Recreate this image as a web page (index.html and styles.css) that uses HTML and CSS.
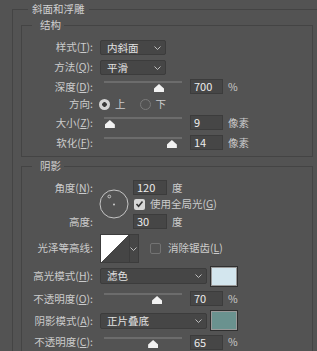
FILE: index.html
```html
<!DOCTYPE html>
<html lang="zh-CN">
<head>
  <meta charset="UTF-8" />
  <title>斜面和浮雕</title>
  <meta name="viewport" content="width=device-width, initial-scale=1.0" />
  <link rel="stylesheet" href="styles.css">
</head>
<body>
  <fieldset class="group outer">
    <legend>斜面和浮雕</legend>

    <fieldset class="group inner">
      <legend>结构</legend>

      <div class="row r20">
        <span class="label">样式(<u>T</u>):</span>
        <div class="select short">内斜面<svg class="chev" width="7" height="4"><path d="M0.5 0.5 L3.5 3.5 L6.5 0.5" /></svg></div>
      </div>
      <div class="row r20">
        <span class="label">方法(<u>Q</u>):</span>
        <div class="select short">平滑<svg class="chev" width="7" height="4"><path d="M0.5 0.5 L3.5 3.5 L6.5 0.5" /></svg></div>
      </div>
      <div class="row r19">
        <span class="label">深度(<u>D</u>):</span>
        <div class="slider"><span class="thumb" style="left: 70.5%"></span></div>
        <div class="field">700</div>
        <span class="unit">%</span>
      </div>
      <div class="row r16">
        <span class="label">方向:</span>
        <span class="radio on"></span><span class="opt">上</span>
        <span class="radio off gap"></span><span class="opt">下</span>
      </div>
      <div class="row r21">
        <span class="label">大小(<u>Z</u>):</span>
        <div class="slider"><span class="thumb" style="left: 7.5%"></span></div>
        <div class="field">9</div>
        <span class="unit">像素</span>
      </div>
      <div class="row r19">
        <span class="label">软化(<u>F</u>):</span>
        <div class="slider"><span class="thumb" style="left: 87%"></span></div>
        <div class="field">14</div>
        <span class="unit">像素</span>
      </div>
    </fieldset>

    <fieldset class="group inner shadow">
      <legend>阴影</legend>

      <div class="angle">
        <span class="label">角度(<u>N</u>):</span>
        <svg class="dial" width="30" height="30">
          <circle cx="15" cy="15" r="14" />
          <circle class="dot" cx="15" cy="15.5" r="0.9" />
          <circle cx="10.3" cy="7.5" r="1.4" />
        </svg>
        <div class="line">
          <div class="field wide">120</div>
          <span class="unit">度</span>
        </div>
        <div class="line check-line">
          <span class="check on"><svg width="9" height="8"><path d="M1.5 4 L3.6 6.2 L7.5 1.5" /></svg></span>
          <span class="opt">使用全局光(<u>G</u>)</span>
        </div>
        <span class="label">高度:</span>
        <div class="line">
          <div class="field wide">30</div>
          <span class="unit">度</span>
        </div>
      </div>

      <div class="row r32">
        <span class="label">光泽等高线:</span>
        <div class="contour">
          <span class="curve"></span>
          <span class="drop"><svg class="chev" width="7" height="4"><path d="M0.5 0.5 L3.5 3.5 L6.5 0.5" /></svg></span>
        </div>
        <span class="check off"></span>
        <span class="opt">消除锯齿(<u>L</u>)</span>
      </div>
      <div class="row r24">
        <span class="label">高光模式(<u>H</u>):</span>
        <div class="select long">滤色<svg class="chev" width="7" height="4"><path d="M0.5 0.5 L3.5 3.5 L6.5 0.5" /></svg></div>
        <span class="swatch light"></span>
      </div>
      <div class="row r21">
        <span class="label">不透明度(<u>O</u>):</span>
        <div class="slider"><span class="thumb" style="left: 68%"></span></div>
        <div class="field">70</div>
        <span class="unit">%</span>
      </div>
      <div class="row r23">
        <span class="label">阴影模式(<u>A</u>):</span>
        <div class="select long">正片叠底<svg class="chev" width="7" height="4"><path d="M0.5 0.5 L3.5 3.5 L6.5 0.5" /></svg></div>
        <span class="swatch dark"></span>
      </div>
      <div class="row r19 last">
        <span class="label">不透明度(<u>C</u>):</span>
        <div class="slider"><span class="thumb" style="left: 63%"></span></div>
        <div class="field">65</div>
        <span class="unit">%</span>
      </div>
    </fieldset>
  </fieldset>
</body>
</html>
```

FILE: styles.css
```css
* {
  box-sizing: border-box;
}

html, body {
  margin: 0;
  padding: 0;
  height: 100%;
  overflow: hidden;
}

body {
  font-family: "Noto Sans CJK SC", "Noto Sans", sans-serif;
  font-size: 10.5px;
  line-height: 14px;
  background: #535353;
  color: #cbcbcb;
}

u {
  text-decoration-thickness: 1px;
  text-underline-offset: 1px;
}

/* fieldset frames */

.group {
  border: 1px solid #444444;
  margin: 0;
  min-width: 0;
}

.group legend {
  padding: 0 4px;
  line-height: 14px;
  color: #d0d0d0;
}

.outer {
  margin: 2px 0 0 12px;
  padding: 2px 0 0 8px;
  border-right: none;
  border-bottom: none;
  height: 349px;
}

.outer > legend {
  margin-left: 7px;
}

.inner {
  margin: 0 4px 0 0;
  padding: 5px 0 4px 0;
}

.inner > legend {
  margin-left: 10px;
  padding: 0 3px 0 8px;
}

.shadow {
  margin-top: 2px;
  padding-bottom: 0;
  border-bottom: none;
}

/* rows */

.row {
  display: flex;
  align-items: center;
}

.r16 { height: 16px; }
.r19 { height: 19px; }
.r20 { height: 20px; }
.r21 { height: 21px; }
.r23 { height: 23px; }
.r24 { height: 24px; }
.r32 { height: 32px; }

.row.last {
  align-items: flex-start;
  padding-top: 3px;
}

.label {
  width: 78px;
  padding-right: 7px;
  text-align: right;
  flex-shrink: 0;
  white-space: nowrap;
}

/* controls */

.select {
  position: relative;
  height: 15px;
  background: #464646;
  border: 1px solid #3c3c3c;
  border-radius: 2px;
  padding-left: 6px;
  line-height: 13px;
  color: #e2e2e2;
}

.select.short {
  width: 66px;
}

.select.long {
  width: 107px;
  height: 16px;
}

.chev {
  position: absolute;
  right: 4px;
  top: 5px;
}

.chev path {
  fill: none;
  stroke: #bdbdbd;
  stroke-width: 1;
}

.slider {
  position: relative;
  width: 78px;
  height: 15px;
  margin-left: 4px;
}

.slider::before {
  content: "";
  position: absolute;
  left: 0;
  right: 0;
  top: 2px;
  height: 2px;
  background: #6c6c6c;
}

.thumb {
  position: absolute;
  top: 5px;
  width: 10px;
  height: 8px;
  margin-left: -5px;
  background: #f2f2f2;
  clip-path: polygon(50% 0, 100% 55%, 100% 100%, 0 100%, 0 55%);
}

.field {
  width: 33px;
  height: 15px;
  margin-left: 8px;
  background: #464646;
  border: 1px solid #3c3c3c;
  padding-left: 3px;
  line-height: 13px;
  font-size: 11px;
  color: #ececec;
}

.field.wide {
  width: 34px;
  margin-left: 0;
}

.unit {
  margin-left: 5px;
}

.radio {
  width: 11px;
  height: 11px;
  border-radius: 50%;
  flex-shrink: 0;
}

.radio.on {
  margin-left: -1px;
  background: radial-gradient(circle, #3a3a3a 0 2px, #d4d4d4 2.6px);
}

.radio.off {
  border: 1px solid #7a7a7a;
}

.radio.gap {
  margin-left: 14px;
}

.opt {
  margin-left: 5px;
}

.check {
  width: 11px;
  height: 11px;
  border-radius: 2px;
  flex-shrink: 0;
  display: flex;
  align-items: center;
  justify-content: center;
}

.check.on {
  background: #d6d6d6;
}

.check.on path {
  fill: none;
  stroke: #333333;
  stroke-width: 1.6;
}

.check.off {
  margin-left: 11px;
  border: 1px solid #737373;
}

.check.off + .opt {
  margin-left: 7px;
}

/* angle block */

.angle {
  display: grid;
  grid-template-columns: 78px 33px 1fr;
  grid-template-rows: 19px 14px 21px;
}

.angle .label {
  grid-column: 1;
  align-self: center;
}

.angle .label:nth-of-type(2) {
  grid-row: 3;
}

.dial {
  grid-column: 2;
  grid-row: 1 / 4;
  margin: 11px 0 0 -1px;
}

.dial circle {
  fill: none;
  stroke: #c4c4c4;
  stroke-width: 1;
}

.dial .dot {
  fill: #d8d8d8;
  stroke: none;
}

.line {
  grid-column: 3;
  display: flex;
  align-items: center;
}

.check-line {
  grid-row: 2;
  padding-left: 1px;
}

/* contour + swatches */

.contour {
  display: flex;
  height: 29px;
  border: 1px solid #3c3c3c;
}

.curve {
  width: 28px;
  height: 27px;
  background: linear-gradient(to bottom right, #ffffff 50%, #454545 50%);
}

.drop {
  position: relative;
  width: 9px;
  background: #464646;
  border-left: 1px solid #3c3c3c;
}

.drop .chev {
  right: 1px;
  top: 12px;
}

.swatch {
  width: 28px;
  height: 21px;
  margin-left: 3px;
  border: 1px solid #2f2f2f;
  box-shadow: inset 0 0 0 1px #9a9a9a;
}

.swatch.light {
  background: #d3e6ee;
}

.swatch.dark {
  background: #6a928f;
}
```
